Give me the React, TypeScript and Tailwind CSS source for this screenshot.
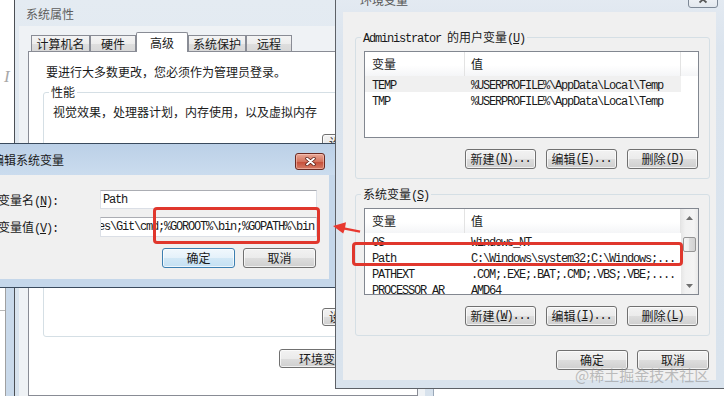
import React from "react";

type Kids = { children?: React.ReactNode };

// half-width text in the dialogs is 6px per char (SimSun style)
function M({ children }: Kids) {
  return (
    <span className="font-['Liberation_Mono',monospace] text-[12px] leading-[10px] tracking-[-1.2px]">
      {children}
    </span>
  );
}

function Btn({
  children,
  className = "",
  primary = false,
}: Kids & { className?: string; primary?: boolean }) {
  const skin = primary
    ? "border-[#3c7fb1] bg-[linear-gradient(#f1f8fd,#e4f1fa_50%,#d2e8f6_50%,#c4e0f3)]"
    : "border-[#707070] bg-[linear-gradient(#f2f2f2,#ebebeb_50%,#dddddd_50%,#cfcfcf)]";
  return (
    <div
      className={`flex items-center justify-center rounded-[3px] border shadow-[inset_0_0_0_1px_rgba(255,255,255,0.7)] ${skin} ${className}`}
    >
      {children}
    </div>
  );
}

function Group({
  label,
  children,
  className = "",
}: Kids & { label: React.ReactNode; className?: string }) {
  return (
    <fieldset className={`border border-[#d5dfe5] rounded-[3px] ${className}`}>
      <legend className="ml-[5px] px-[2px] h-[14px] leading-[14px]">{label}</legend>
      {children}
    </fieldset>
  );
}

function ScrollBar() {
  return (
    <div className="w-[17px] shrink-0 flex flex-col bg-[linear-gradient(90deg,#e6e6e6,#f1f1f1_25%,#f4f4f4_75%,#e9e9e9)]">
      <div className="h-[17px] flex items-center justify-center">
        <svg width="7" height="4" viewBox="0 0 7 4">
          <path d="M0 4L3.5 0L7 4Z" fill="#707070" />
        </svg>
      </div>
      <div className="h-[11px]" />
      <div className="mx-[2px] h-[15px] rounded-[2px] border border-[#959595] bg-[linear-gradient(90deg,#f5f5f5,#ececec_50%,#dcdcdc_50%,#d2d2d2)]" />
      <div className="flex-1" />
      <div className="h-[17px] flex items-center justify-center">
        <svg width="7" height="4" viewBox="0 0 7 4">
          <path d="M0 0L3.5 4L7 0Z" fill="#707070" />
        </svg>
      </div>
    </div>
  );
}

function ListView({ rows, scroll = false, hl = -1 }: { rows: string[][]; scroll?: boolean; hl?: number }) {
  return (
    <div className="ml-[8px] w-[335px] h-[87px] border border-[#828790] bg-white flex overflow-hidden">
      <div className="w-[316px] shrink-0 flex flex-col">
        <div className="h-[24px] shrink-0 flex bg-[linear-gradient(#ffffff,#ffffff_55%,#f4f5f7)]">
          <div className="w-[100px] pl-[7px] flex items-center border-r border-[#e3e3e3]">变量</div>
          <div className="w-[216px] pl-[6px] flex items-center border-r border-[#e3e3e3]">值</div>
        </div>
        {rows.map(([k, v], i) => (
          <div
            key={k}
            className={`h-[16px] shrink-0 flex items-center whitespace-nowrap ${i === hl ? "bg-[#f0f0f0]" : ""}`}
          >
            <div className="w-[100px] pl-[7px] overflow-hidden">
              <M>{k}</M>
            </div>
            <div className="w-[216px] pl-[6px] overflow-hidden">
              <M>{v}</M>
            </div>
          </div>
        ))}
      </div>
      {scroll ? (
        <ScrollBar />
      ) : (
        <div className="flex-1 h-[24px] bg-[linear-gradient(#ffffff,#ffffff_55%,#f4f5f7)]" />
      )}
    </div>
  );
}

const userRows = [
  ["TEMP", String.raw`%USERPROFILE%\AppData\Local\Temp`],
  ["TMP", String.raw`%USERPROFILE%\AppData\Local\Temp`],
];

const sysRows = [
  ["OS", "Windows_NT"],
  ["Path", String.raw`C:\Windows\system32;C:\Windows;...`],
  ["PATHEXT", ".COM;.EXE;.BAT;.CMD;.VBS;.VBE;...."],
  ["PROCESSOR_AR", "AMD64"],
];

const tabs = [
  { label: "计算机名", w: "w-[59px]" },
  { label: "硬件", w: "w-[46px]" },
  { label: "高级", w: "w-[52px]", active: true },
  { label: "系统保护", w: "w-[58px]" },
  { label: "远程", w: "w-[46px]" },
];

export default function App() {
  return (
    <div className="relative w-[724px] h-[396px] overflow-hidden bg-white text-[12px] leading-[14px] text-[#1a1a1a] font-['Noto_Sans_CJK_SC',sans-serif]">
      {/* window behind everything, left edge */}
      <div className="absolute left-0 top-0 w-[14px] h-[396px] bg-white flex flex-col">
        <div className="pt-[68px] pl-[4px] font-['Liberation_Serif',serif] italic text-[17px] leading-[18px] text-[#a8a8a8]">
          I
        </div>
        <div className="mt-auto h-[109px] flex">
          <div className="w-[6px] border-r border-[#a0a0a0]">
            <div className="mt-[23px] border-t border-[#b8b8b8]" />
          </div>
          <div className="w-[8px] bg-[#c9d9ea]" />
        </div>
      </div>

      {/* 系统属性 */}
      <div className="absolute left-[14px] top-0 w-[420px] h-[420px] border-x border-l-[#4b4f55] border-r-[#9aa8b8] bg-[linear-gradient(#e4ebf2,#d6e1ec)] flex flex-col">
        <div className="h-[26px] shrink-0 pl-[11px] pt-[7px] text-[#5e5e5e]">系统属性</div>
        <div className="ml-[4px] w-[406px] flex-1 bg-[#eff2f5] pl-[9px] pt-[6px] flex flex-col">
          <div className="h-[20px] pl-[3px] flex items-end">
            {tabs.map((t) =>
              t.active ? (
                <div
                  key={t.label}
                  className={`relative z-10 h-[20px] ${t.w} bg-white border border-b-0 border-[#898c95] rounded-t-[2px] flex items-center justify-center`}
                >
                  {t.label}
                </div>
              ) : (
                <div
                  key={t.label}
                  className={`h-[17px] ${t.w} border border-b-0 border-[#898c95] bg-[linear-gradient(#f4f4f4,#ececec_50%,#dedede_50%,#d7d7d7)] flex items-center justify-center`}
                >
                  {t.label}
                </div>
              )
            )}
          </div>
          <div className="-mt-px w-[390px] h-[345px] bg-white border border-[#898c95] flex flex-col px-[14px] pt-[13px]">
            <div className="ml-[3px]">要进行大多数更改，您必须作为管理员登录。</div>
            <Group className="mt-[6px] h-[252px]" label="性能">
              <div className="pl-[9px] pt-[6px]">视觉效果，处理器计划，内存使用，以及虚拟内存</div>
              <div className="pt-[15px] pr-[6px] flex justify-end">
                <Btn className="w-[74px] h-[18px]">
                  设置<M>(<u>S</u>)...</M>
                </Btn>
              </div>
              <div className="pt-[156px] pr-[6px] flex justify-end">
                <Btn className="w-[74px] h-[18px]">
                  设置<M>(<u>T</u>)...</M>
                </Btn>
              </div>
            </Group>
            <div className="mt-[12px] flex justify-end">
              <Btn className="w-[124px] h-[19px]">
                环境变量<M>(<u>N</u>)...</M>
              </Btn>
            </div>
          </div>
        </div>
      </div>

      {/* 编辑系统变量 */}
      <div className="absolute left-[-20px] top-[143px] w-[356px] h-[145px] border border-[#394a5d] bg-[#c5d7ea] flex flex-col">
        <div className="h-[31px] shrink-0 flex items-start bg-[linear-gradient(#bbd0e7,#cbdcee)]">
          <div className="self-center pl-[11px] text-[#1a1a1a]">编辑系统变量</div>
          <div className="ml-auto mr-[10px] mt-[9px] w-[30px] h-[17px] rounded-[3px] border border-[#6b2a22] bg-[linear-gradient(#e9a897,#d4735e_50%,#c44b36_50%,#d67c66)] shadow-[inset_0_0_0_1px_rgba(255,210,200,0.5)] flex items-center justify-center">
            <svg width="11" height="9" viewBox="0 0 11 9">
              <path d="M2 1.5L9 7.5M9 1.5L2 7.5" stroke="#5a1d15" strokeWidth="3.4" strokeLinecap="round" />
              <path d="M2 1.5L9 7.5M9 1.5L2 7.5" stroke="#ffffff" strokeWidth="1.9" strokeLinecap="round" />
            </svg>
          </div>
        </div>
        <div className="mx-[6px] h-[104px] bg-[#f0f0f0] flex flex-col pl-[11px] pr-[12px] pt-[15px]">
          <div className="h-[19px] flex items-center">
            <div className="w-[102px] whitespace-nowrap">
              变量名<M>(<u>N</u>):</M>
            </div>
            <div className="w-[217px] h-[19px] bg-white border border-[#dbdfe6] border-t-[#abadb3] flex items-center pl-[2px]">
              <M>Path</M>
            </div>
          </div>
          <div className="mt-[8px] h-[20px] flex items-center">
            <div className="w-[102px] whitespace-nowrap">
              变量值<M>(<u>V</u>):</M>
            </div>
            <div className="w-[217px] h-[20px] bg-white border border-[#dbdfe6] border-t-[#abadb3] flex items-center justify-end overflow-hidden pr-[2px] whitespace-nowrap">
              <M>{String.raw`C:\Program Files\Git\cmd;%GOROOT%\bin;%GOPATH%\bin`}</M>
            </div>
          </div>
          <div className="mt-[11px] mr-[1px] flex justify-end gap-[8px]">
            <Btn primary className="w-[73px] h-[20px]">
              确定
            </Btn>
            <Btn className="w-[73px] h-[20px]">取消</Btn>
          </div>
        </div>
      </div>

      {/* 环境变量 */}
      <div className="absolute left-[335px] top-[-14px] w-[400px] h-[403px] border border-[#5d6167] bg-[linear-gradient(#e5ebf2,#dbe4ee_60px,#d9e3ed)] flex flex-col">
        <div className="h-[25px] shrink-0 flex items-start">
          <div className="self-center pl-[24px] text-[#555555]">环境变量</div>
          <div className="ml-auto mr-[16px] mt-[3px] w-[30px] h-[18px] rounded-[3px] border border-[#7d8896] bg-[linear-gradient(#f7f9fb,#e3e8ee)] flex items-center justify-center">
            <svg width="10" height="9" viewBox="0 0 10 9">
              <path d="M1.5 1.5L8.5 7.5M8.5 1.5L1.5 7.5" stroke="#5a5a5a" strokeWidth="1.8" />
            </svg>
          </div>
        </div>
        <div className="ml-[7px] w-[373px] h-[368px] bg-[#f0f0f0] flex flex-col">
          <Group
            className="mt-[18px] ml-[12px] w-[355px]"
            label={
              <>
                <M>Administrator </M>的用户变量<M>(<u>U</u>)</M>
              </>
            }
          >
            <div className="pt-[7px]">
              <ListView rows={userRows} hl={0} />
            </div>
            <div className="pt-[11px] pb-[9px] pr-[11px] flex justify-end gap-[10px]">
              <Btn className="w-[71px] h-[20px]">
                新建<M>(<u>N</u>)...</M>
              </Btn>
              <Btn className="w-[71px] h-[20px]">
                编辑<M>(<u>E</u>)...</M>
              </Btn>
              <Btn className="w-[71px] h-[20px]">
                删除<M>(<u>D</u>)</M>
              </Btn>
            </div>
          </Group>
          <Group
            className="mt-[8px] ml-[12px] w-[355px]"
            label={
              <>
                系统变量<M>(<u>S</u>)</M>
              </>
            }
          >
            <div className="pt-[7px]">
              <ListView rows={sysRows} scroll />
            </div>
            <div className="pt-[11px] pb-[9px] pr-[11px] flex justify-end gap-[10px]">
              <Btn className="w-[71px] h-[20px]">
                新建<M>(<u>W</u>)...</M>
              </Btn>
              <Btn className="w-[71px] h-[20px]">
                编辑<M>(<u>I</u>)...</M>
              </Btn>
              <Btn className="w-[71px] h-[20px]">
                删除<M>(<u>L</u>)</M>
              </Btn>
            </div>
          </Group>
          <div className="mt-[14px] pr-[7px] flex justify-end gap-[9px]">
            <Btn className="w-[72px] h-[20px]">确定</Btn>
            <Btn className="w-[72px] h-[20px]">取消</Btn>
          </div>
        </div>
      </div>

      {/* annotations */}
      <div className="absolute left-[153px] top-[207px] w-[167px] h-[37px] border-[3px] border-[#e0372d] rounded-[4px]" />
      <div className="absolute left-[352px] top-[242px] w-[331px] h-[24px] border-[3px] border-[#e0372d] rounded-[4px]" />
      <svg className="absolute left-[330px] top-[218px]" width="32" height="18" viewBox="0 0 32 18">
        <path d="M3 8L16 4.3L15.1 9.4L30.3 12.6L29.8 14.8L14.6 11.7L13.2 15.4Z" fill="#e8382f" />
      </svg>

      <div className="absolute left-[575px] top-[366px] text-[15px] leading-[17px] text-[rgba(140,140,140,0.55)]">
        @稀土掘金技术社区
      </div>
    </div>
  );
}
